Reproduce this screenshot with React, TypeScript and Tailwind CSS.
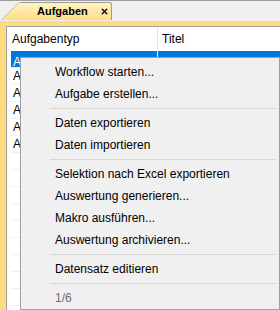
import { X } from 'lucide-react';

const rows = ['Aufgabe', 'Aufgabe', 'Aufgabe', 'Aufgabe', 'Aufgabe'];

type Entry = { label: string; muted?: boolean } | 'sep';

const menu: Entry[] = [
  { label: 'Workflow starten...' },
  { label: 'Aufgabe erstellen...' },
  'sep',
  { label: 'Daten exportieren' },
  { label: 'Daten importieren' },
  'sep',
  { label: 'Selektion nach Excel exportieren' },
  { label: 'Auswertung generieren...' },
  { label: 'Makro ausführen...' },
  { label: 'Auswertung archivieren...' },
  'sep',
  { label: 'Datensatz editieren' },
  'sep',
  { label: '1/6', muted: true },
];

function ContextMenu() {
  return (
    <div className="absolute left-[20px] top-[56px] w-[260px] h-[253px] bg-[#f0f0f0] border border-[#a0a0a0] shadow-[2px_2px_2px_rgba(0,0,0,0.2)] pt-[3px]">
      {menu.map((m, i) =>
        m === 'sep' ? (
          <div key={i} className="h-[7px] flex items-center pl-[29px] pr-[3px]">
            <div className="h-px w-full bg-[#d7d7d7]" />
          </div>
        ) : (
          <div
            key={i}
            className={
              'h-[22px] flex items-center pl-[34px] ' + (m.muted ? 'text-[#6d6d6d]' : 'text-black')
            }
          >
            {m.label}
          </div>
        )
      )}
    </div>
  );
}

export default function App() {
  return (
    <div className="relative w-[280px] h-[310px] overflow-hidden bg-[#f0f0f0] border-t border-[#a0a0a0] text-[12px] font-['Liberation_Sans',Arial,sans-serif] leading-none">
      {/* tab strip */}
      <div className="flex pt-[1px] h-[20px]">
        <svg width="20" height="18" viewBox="0 0 20 18" className="shrink-0">
          <defs>
            <linearGradient id="tabg" x1="0" y1="0" x2="0" y2="1">
              <stop offset="0" stopColor="#fff3c2" />
              <stop offset="1" stopColor="#ffdd85" />
            </linearGradient>
          </defs>
          <polygon points="2,18 19,0.5 20,0.5 20,18" fill="url(#tabg)" />
          <line x1="1.5" y1="18" x2="19" y2="0.5" stroke="#8a8a8a" strokeDasharray="1 1" />
        </svg>
        <div className="w-[92px] h-[18px] flex items-center border-t border-r border-[#9a9a9a] rounded-tr-[3px] bg-gradient-to-b from-[#fff3c2] to-[#ffdd85]">
          <span className="ml-[17px] font-bold text-[11px] text-black">Aufgaben</span>
          <X className="ml-[12px] w-[9px] h-[9px] text-black shrink-0" strokeWidth={3.5} />
        </div>
      </div>

      {/* pane */}
      <div className="bg-[#ffdb7f] pt-[5px] pl-[6px] h-[290px]">
        <div className="bg-white border-l border-t border-[#a0a0a0] h-full">
          <div className="flex h-[24px] items-center">
            <div className="w-[150px] pl-[5px]">Aufgabentyp</div>
            <div className="h-full border-l border-[#e5e5e5] flex items-center pl-[4px]">Titel</div>
          </div>
          <div className="ml-[4px]">
            <div className="flex h-[17px] bg-[#0078d7] text-white border-b border-[#f0f0f0]">
              <div className="w-[146px] pl-[2px] flex items-center pt-[6px]">Aufgabe</div>
              <div className="border-l border-[#e8f2fc] pl-[4px] flex items-center pt-[6px]">neue Aufgabe</div>
            </div>
            {rows.map((r, i) => (
              <div key={i} className="flex h-[17px] border-b border-[#f0f0f0] text-black">
                <div className="w-[146px] pl-[2px] flex items-center">{r}</div>
                <div className="border-l border-[#f0f0f0] pl-[4px] flex items-center">Titel</div>
              </div>
            ))}
            {Array.from({ length: 10 }).map((_, i) => (
              <div key={'e' + i} className="h-[17px] border-b border-[#f0f0f0]" />
            ))}
          </div>
        </div>
      </div>

      <ContextMenu />
    </div>
  );
}
